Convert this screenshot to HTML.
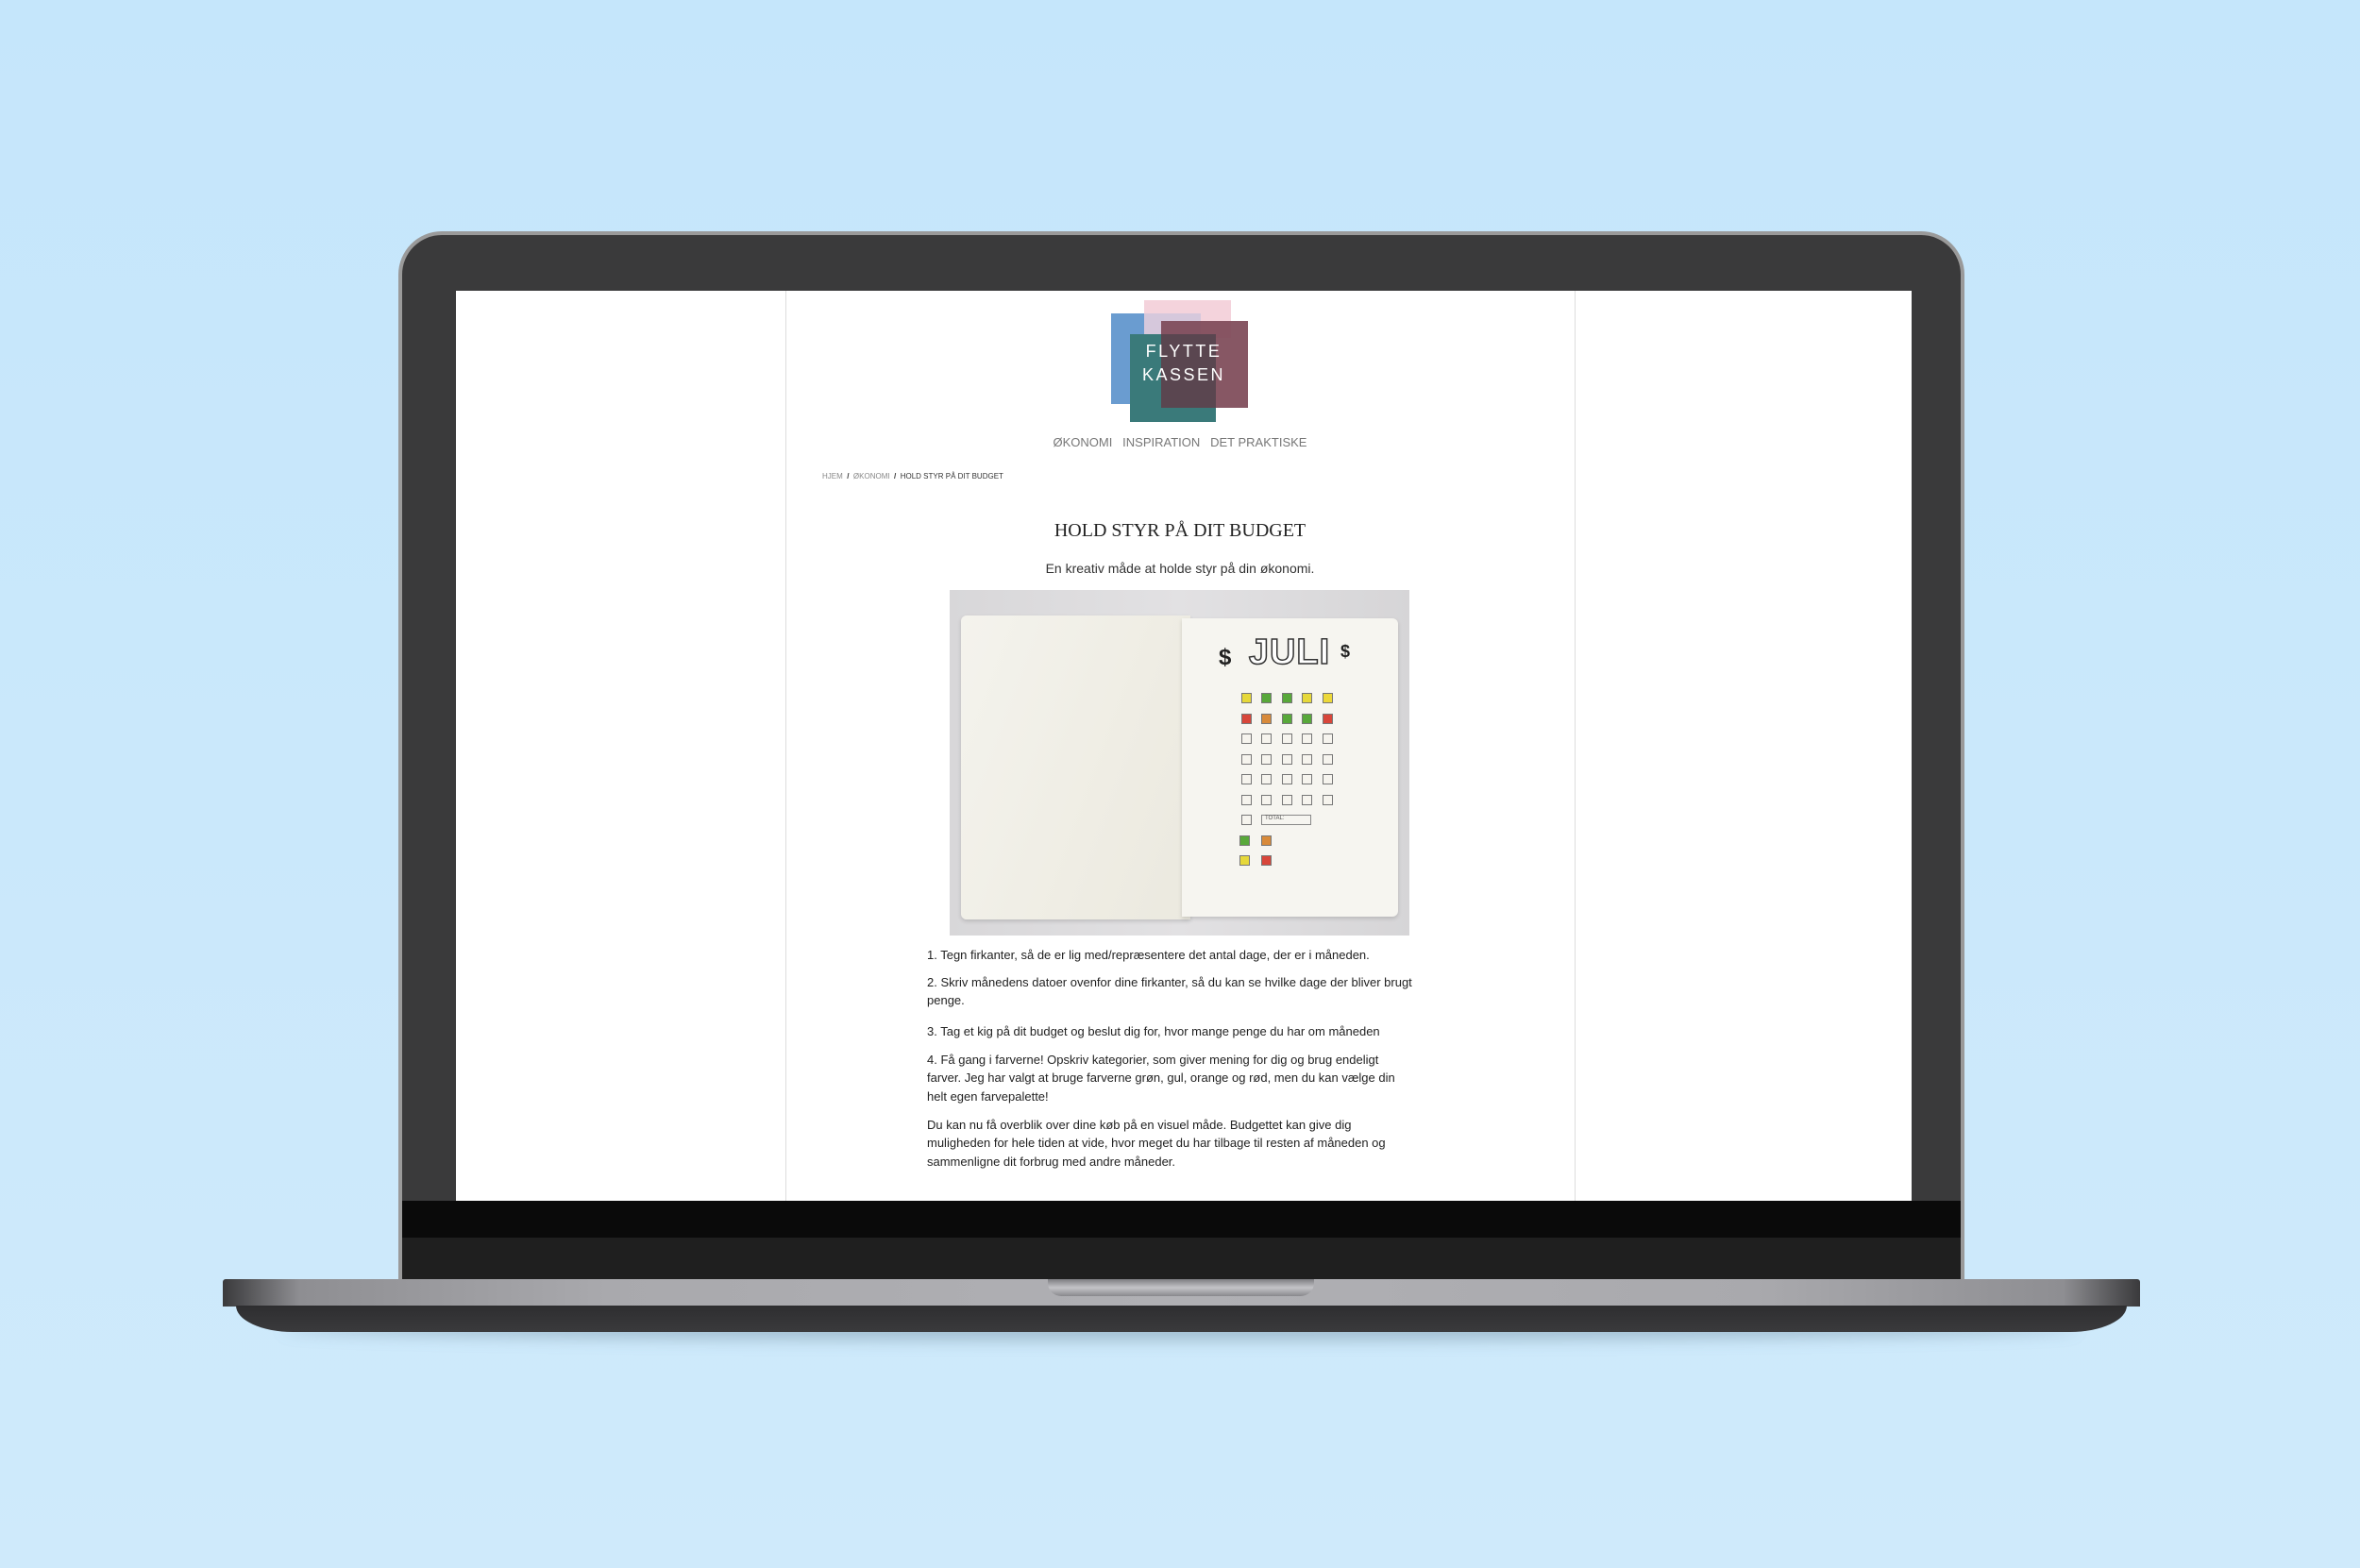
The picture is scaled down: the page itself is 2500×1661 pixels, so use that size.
<!DOCTYPE html>
<html><head><meta charset="utf-8"><style>
*{margin:0;padding:0;box-sizing:border-box}
body{width:2500px;height:1661px;overflow:hidden;background:linear-gradient(#c5e6fb,#cfeafb);position:relative;font-family:"Liberation Sans",sans-serif}
.a{position:absolute}
.sq{position:absolute;width:11px;height:11px;border:1px solid #777;background:#f6f4ee}
.p{position:absolute;left:982px;font-size:13px;color:#222;line-height:19.3px;width:560px}
</style></head><body>
<!-- lid -->
<div class="a" style="left:422px;top:245px;width:1659px;height:1115px;border-radius:46px 46px 0 0;background:#9a9a9a"></div>
<div class="a" style="left:426px;top:249px;width:1651px;height:1108px;border-radius:42px 42px 0 0;background:#3a3a3b"></div>
<div class="a" style="left:426px;top:1272px;width:1651px;height:40px;background:#0a0a0a"></div>
<div class="a" style="left:426px;top:1311px;width:1651px;height:45px;background:#1f1f1f"></div>
<!-- screen -->
<div class="a" style="left:483px;top:308px;width:1542px;height:964px;background:#fff;overflow:hidden">
  <div class="a" style="left:349px;top:0;width:1px;height:964px;background:#ddd"></div>
  <div class="a" style="left:1185px;top:0;width:1px;height:964px;background:#ddd"></div>
</div>
<!-- logo -->
<div class="a" style="left:1212px;top:318px;width:92px;height:40px;background:#f4d3dc"></div>
<div class="a" style="left:1177px;top:332px;width:95px;height:96px;background:#6a9cd0"></div>
<div class="a" style="left:1212px;top:332px;width:60px;height:22px;background:#d6c8dc"></div>
<div class="a" style="left:1197px;top:354px;width:91px;height:93px;background:#3a7a7a"></div>
<div class="a" style="left:1230px;top:340px;width:92px;height:92px;background:#7e4a58;opacity:.93"></div>
<div class="a" style="left:1230px;top:354px;width:58px;height:78px;background:#5a4650"></div>
<div class="a" style="left:1179px;top:360px;width:150px;text-align:center;color:#fff;font-size:18px;letter-spacing:2.5px;line-height:25px">FLYTTE<br>KASSEN</div>
<!-- nav -->
<div class="a" style="left:1100px;top:461px;width:300px;text-align:center;color:#777;font-size:13px;white-space:nowrap">ØKONOMI&nbsp;&nbsp; INSPIRATION&nbsp;&nbsp; DET PRAKTISKE</div>
<div class="a" style="left:871px;top:500px;font-size:8px;color:#888;white-space:nowrap">HJEM &nbsp;<b style="color:#333">/</b>&nbsp; ØKONOMI &nbsp;<b style="color:#333">/</b>&nbsp; <span style="color:#333">HOLD STYR PÅ DIT BUDGET</span></div>
<div class="a" style="left:1000px;top:551px;width:500px;text-align:center;font-family:'Liberation Serif',serif;font-size:20px;color:#222">HOLD STYR PÅ DIT BUDGET</div>
<div class="a" style="left:1000px;top:594px;width:500px;text-align:center;font-size:14px;color:#333">En kreativ måde at holde styr på din økonomi.</div>
<!-- photo -->
<div class="a" style="left:1006px;top:625px;width:487px;height:366px;background:linear-gradient(90deg,#d8d7d9,#e2e1e3 50%,#d6d5d7);overflow:hidden">
  <div class="a" style="left:12px;top:27px;width:243px;height:322px;background:linear-gradient(110deg,#f4f3ed,#efede4 60%,#ebe9df);border-radius:6px 0 0 6px;box-shadow:0 2px 4px rgba(0,0,0,.15)"></div>
  <div class="a" style="left:246px;top:30px;width:229px;height:316px;background:#f6f5f0;border-radius:0 6px 6px 0;box-shadow:0 2px 4px rgba(0,0,0,.15)"></div>
  <div class="a" style="left:310px;top:45px;width:100px;text-align:center;font-size:38px;color:#fff;-webkit-text-stroke:1.5px #333;letter-spacing:1px;font-weight:bold">JULI</div>
  <div class="a" style="left:285px;top:58px;font-size:24px;color:#222;font-weight:bold">$</div>
  <div class="a" style="left:414px;top:55px;font-size:18px;color:#222;font-weight:bold">$</div>
</div>
<div id="g"></div>
<script>
var xs=[1320,1341,1363,1384,1406],ys=[739,761,782,804,825,847,868];
var c=[["#e6d83a","#58a83a","#58a83a","#e6d83a","#ecd83a"],["#d8463a","#d88a3a","#58a83a","#58a83a","#d8463a"]];
var h="";
for(var r=0;r<7;r++)for(var k=0;k<5;k++){if(r==6&&k>0)break;var bg=r<2?c[r][k]:"#f6f4ee";h+='<div class="sq" style="left:'+(xs[k]-5)+'px;top:'+(ys[r]-5)+'px;background:'+bg+'"></div>';}
h+='<div class="a" style="left:1336px;top:863px;width:53px;height:11px;border:1px solid #888;font-size:6px;color:#555;padding-left:3px">TOTAL:</div>';
h+='<div class="sq" style="left:1313px;top:885px;background:#58a83a"></div><div class="sq" style="left:1336px;top:885px;background:#d88a3a"></div>';
h+='<div class="sq" style="left:1313px;top:906px;background:#e6d83a"></div><div class="sq" style="left:1336px;top:906px;background:#d8463a"></div>';
document.getElementById("g").innerHTML=h;
</script>
<!-- text -->
<div class="p" style="top:1002px">1. Tegn firkanter, så de er lig med/repræsentere det antal dage, der er i måneden.</div>
<div class="p" style="top:1031px">2. Skriv månedens datoer ovenfor dine firkanter, så du kan se hvilke dage der bliver brugt<br>penge.</div>
<div class="p" style="top:1083px">3. Tag et kig på dit budget og beslut dig for, hvor mange penge du har om måneden</div>
<div class="p" style="top:1113px">4. Få gang i farverne! Opskriv kategorier, som giver mening for dig og brug endeligt<br>farver. Jeg har valgt at bruge farverne grøn, gul, orange og rød, men du kan vælge din<br>helt egen farvepalette!</div>
<div class="p" style="top:1182px">Du kan nu få overblik over dine køb på en visuel måde. Budgettet kan give dig<br>muligheden for hele tiden at vide, hvor meget du har tilbage til resten af måneden og<br>sammenligne dit forbrug med andre måneder.</div>
<!-- base -->
<div class="a" style="left:300px;top:1395px;width:1900px;height:25px;border-radius:50%;background:rgba(80,110,130,.35);filter:blur(8px)"></div>
<div class="a" style="left:236px;top:1355px;width:2031px;height:29px;border-radius:3px 3px 0 0;background:linear-gradient(90deg,#3a3a3c,#8e8e92 4%,#a9a9ad 20%,#b0b0b4 50%,#a9a9ad 80%,#8e8e92 96%,#3a3a3c)"></div>
<div class="a" style="left:250px;top:1383px;width:2003px;height:28px;border-radius:0 0 60px 60px/0 0 28px 28px;background:linear-gradient(#2e2e30,#3a3a3c)"></div>
<div class="a" style="left:1110px;top:1355px;width:282px;height:18px;border-radius:0 0 14px 14px;background:linear-gradient(#7c7c80,#c4c4c8 50%,#88888c)"></div>
</body></html>
